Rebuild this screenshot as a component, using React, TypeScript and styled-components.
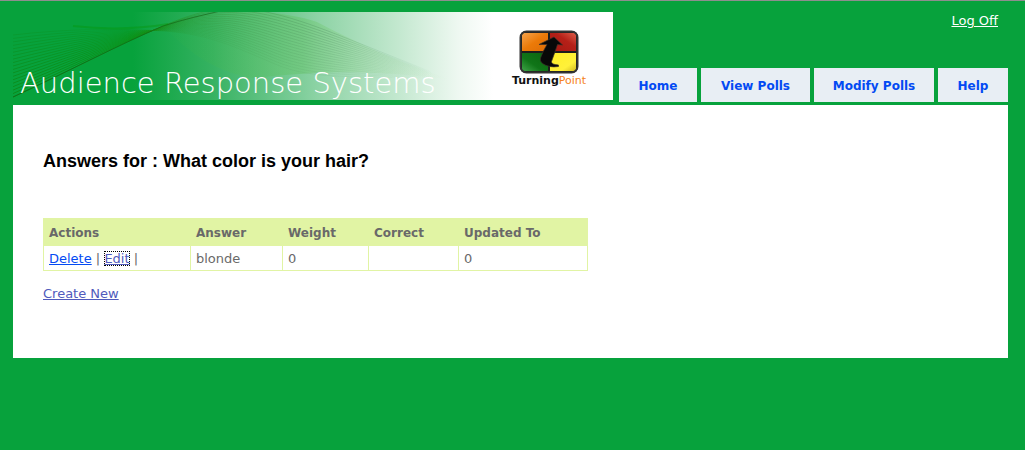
import React from "react";
import styled, { createGlobalStyle } from "styled-components";

const GREEN = "#07a23c";
const LIME = "#e1f4a4";

const GlobalStyle = createGlobalStyle`
  * { box-sizing: border-box; }
  body {
    margin: 0;
    border-top: 1px solid #8e8e8e;
    background: ${GREEN};
    color: #696969;
    font: 13px/16px "DejaVu Sans", Verdana, sans-serif;
  }
`;

const Page = styled.div`
  padding: 11px 17px 20px 13px;
`;

const Header = styled.header`
  display: flex;
  justify-content: space-between;
  align-items: stretch;
  height: 93px;
`;

const Banner = styled.div`
  display: grid;
  width: 600px;
  height: 88px;
  background: linear-gradient(to right, ${GREEN} 0, ${GREEN} 120px, #36b262 200px, #8dd3a5 305px, #c3e8cf 385px, #eef8f1 445px, #fff 480px);
  > * { grid-area: 1 / 1; }
`;

const BannerTitle = styled.h1`
  align-self: end;
  margin: 0;
  padding-left: 7px;
  color: #fff;
  font-family: "DejaVu Sans Light", "DejaVu Sans", Verdana, sans-serif;
  font-size: 29px;
  line-height: 34px;
  font-weight: 200;
  white-space: nowrap;
`;

const Brand = styled.div`
  justify-self: end;
  display: flex;
  flex-direction: column;
  align-items: center;
  width: 128px;
  padding-top: 18px;
`;

const BrandName = styled.div`
  color: #111;
  font: bold 11px/14px "DejaVu Sans", sans-serif;
  span { color: #f58220; font-weight: 400; }
`;

const HeaderSide = styled.div`
  display: flex;
  flex-direction: column;
  justify-content: space-between;
  align-items: flex-end;
  padding-bottom: 3px;
`;

const LogOff = styled.a`
  margin-right: 10px;
  padding-top: 1px;
  color: #fff;
`;

const Nav = styled.nav`
  display: flex;
  gap: 4px;
`;

const Tab = styled.a<{ $width: number }>`
  width: ${(p) => p.$width}px;
  padding-top: 2px;
  background: #e8eef4;
  color: #034af3;
  font-size: 12px;
  line-height: 32px;
  font-weight: bold;
  text-align: center;
  text-decoration: none;
  white-space: nowrap;
`;

const Main = styled.main`
  padding: 44px 30px 56px;
  background: #fff;
`;

const Title = styled.h2`
  margin: 0 0 45px;
  color: #000;
  font: bold 18px/24px "Liberation Sans", Arial, sans-serif;
`;

const Table = styled.table`
  width: 545px;
  margin-bottom: 15px;
  border: 1px solid ${LIME};
  border-collapse: collapse;
  table-layout: fixed;
`;

const HeadCell = styled.th<{ $width: number }>`
  width: ${(p) => p.$width}px;
  height: 27px;
  padding: 2px 5px 0;
  background: ${LIME};
  border: 1px solid ${LIME};
  font-size: 12px;
  text-align: left;
`;

const Cell = styled.td`
  height: 25px;
  padding: 2px 5px 0;
  border: 1px solid ${LIME};
`;

const ActionLink = styled.a<{ $visited?: boolean; $focused?: boolean }>`
  color: ${(p) => (p.$visited ? "#505abc" : "#034af3")};
  outline: ${(p) => (p.$focused ? "1px dotted #000" : "none")};
  outline-offset: -1px;
`;

const lines = Array.from({ length: 19 }, (_, i) => i / 18);

function Waves() {
  return (
    <svg width="600" height="88" viewBox="0 0 600 88" fill="none" aria-hidden="true">
      <defs>
        <linearGradient id="strand" gradientUnits="userSpaceOnUse" x1="0" y1="0" x2="420" y2="0">
          <stop offset="0" stopColor="#0c8410" stopOpacity=".8" />
          <stop offset=".28" stopColor="#0b8c0a" stopOpacity=".6" />
          <stop offset=".5" stopColor="#3a9a45" stopOpacity=".5" />
          <stop offset=".75" stopColor="#5f9e70" stopOpacity=".45" />
          <stop offset=".88" stopColor="#7fb890" stopOpacity=".25" />
          <stop offset="1" stopColor="#8fc9a0" stopOpacity="0" />
        </linearGradient>
        <linearGradient id="glow" gradientUnits="userSpaceOnUse" x1="140" y1="0" x2="440" y2="0">
          <stop offset="0" stopColor="#4dbb35" stopOpacity="0" />
          <stop offset=".5" stopColor="#55bd49" stopOpacity=".3" />
          <stop offset="1" stopColor="#c6e8b5" stopOpacity="0" />
        </linearGradient>
      </defs>
      <path d="M150 14C195-5 262-4 304 10C350 34 400 56 440 68C350 56 300 60 240 66C205 60 180 45 150 14Z" fill="url(#glow)" />
      {lines.map((t) => (
        <path
          key={t}
          stroke="url(#strand)"
          strokeOpacity={1 - t * 0.7}
          d={`M0 ${85 - 62 * t}C50 ${62 - 45 * t} 105 ${33 - 17 * t} 150 ${14 + 5 * t}S220 ${-8 + 42 * t} 262 ${2 + 50 * t}S350 ${34 + 28 * t} 440 68`}
        />
      ))}
      <path d="M0 85C50 62 105 33 150 14C172 7 190 3 212-2" stroke="#145f14" strokeOpacity=".6" />
      <path d="M60 14C95 18 125 17 155 12" stroke="#079600" strokeWidth="2" strokeOpacity=".35" />
    </svg>
  );
}

function BrandMark() {
  return (
    <svg width="60" height="44" viewBox="0 0 60 44" aria-hidden="true">
      <defs>
        <clipPath id="plate"><rect x="2" y="2" width="56" height="40" rx="5" /></clipPath>
        <linearGradient id="orange" x2="1" y2="1"><stop stopColor="#f6a34c" /><stop offset=".5" stopColor="#ec7a08" /><stop offset="1" stopColor="#dd6d07" /></linearGradient>
        <linearGradient id="red" x1="1" x2="0" y2="1"><stop stopColor="#dc5c48" /><stop offset=".4" stopColor="#b52018" /><stop offset="1" stopColor="#a51812" /></linearGradient>
        <linearGradient id="leaf" y1="1" x2="1" y2="0"><stop stopColor="#3fa448" /><stop offset=".4" stopColor="#107518" /><stop offset="1" stopColor="#0b650f" /></linearGradient>
        <linearGradient id="yellow" x2="1" y2="1"><stop stopColor="#ffef25" /><stop offset=".7" stopColor="#fff13a" /><stop offset="1" stopColor="#d3bd22" /></linearGradient>
      </defs>
      <rect x="1" y="1" width="58" height="42" rx="6" fill="#1d1d1d" />
      <g clipPath="url(#plate)">
        <rect x="3" y="3" width="26" height="18" fill="url(#orange)" />
        <rect x="31" y="3" width="26" height="18" fill="url(#red)" />
        <rect x="3" y="23" width="26" height="18" fill="url(#leaf)" />
        <rect x="31" y="23" width="26" height="18" fill="url(#yellow)" />
      </g>
      <rect x="1.5" y="1.5" width="57" height="41" rx="6" fill="none" stroke="#333" strokeWidth="2" />
      <path d="M35 7L43.5 15L38.5 14.5Q36 22 32.5 31.5Q32 34.5 39.5 35V36.5Q30 38 23.5 33.5Q20.5 31 21.5 28Q24 21 28 14.5H20Z" fill="#080808" stroke="#3b3028" strokeWidth=".7" />
    </svg>
  );
}

const tabs = [
  { label: "Home", width: 78 },
  { label: "View Polls", width: 109 },
  { label: "Modify Polls", width: 120 },
  { label: "Help", width: 70 },
];

const columns = [
  { label: "Actions", width: 147 },
  { label: "Answer", width: 92 },
  { label: "Weight", width: 86 },
  { label: "Correct", width: 90 },
  { label: "Updated To", width: 129 },
];

export default function App() {
  return (
    <>
      <GlobalStyle />
      <Page>
        <Header>
          <Banner>
            <Waves />
            <BannerTitle>Audience Response Systems</BannerTitle>
            <Brand>
              <BrandMark />
              <BrandName>Turning<span>Point</span></BrandName>
            </Brand>
          </Banner>
          <HeaderSide>
            <LogOff href="#logoff">Log Off</LogOff>
            <Nav>
              {tabs.map((tab) => (
                <Tab key={tab.label} href="#" $width={tab.width}>{tab.label}</Tab>
              ))}
            </Nav>
          </HeaderSide>
        </Header>
        <Main>
          <Title>Answers for : What color is your hair?</Title>
          <Table>
            <thead>
              <tr>
                {columns.map((column) => (
                  <HeadCell key={column.label} scope="col" $width={column.width}>{column.label}</HeadCell>
                ))}
              </tr>
            </thead>
            <tbody>
              <tr>
                <Cell>
                  <ActionLink href="#delete">Delete</ActionLink> |{" "}
                  <ActionLink href="#edit" $visited $focused>Edit</ActionLink> |
                </Cell>
                <Cell>blonde</Cell>
                <Cell>0</Cell>
                <Cell />
                <Cell>0</Cell>
              </tr>
            </tbody>
          </Table>
          <ActionLink href="#create" $visited>Create New</ActionLink>
        </Main>
      </Page>
    </>
  );
}
